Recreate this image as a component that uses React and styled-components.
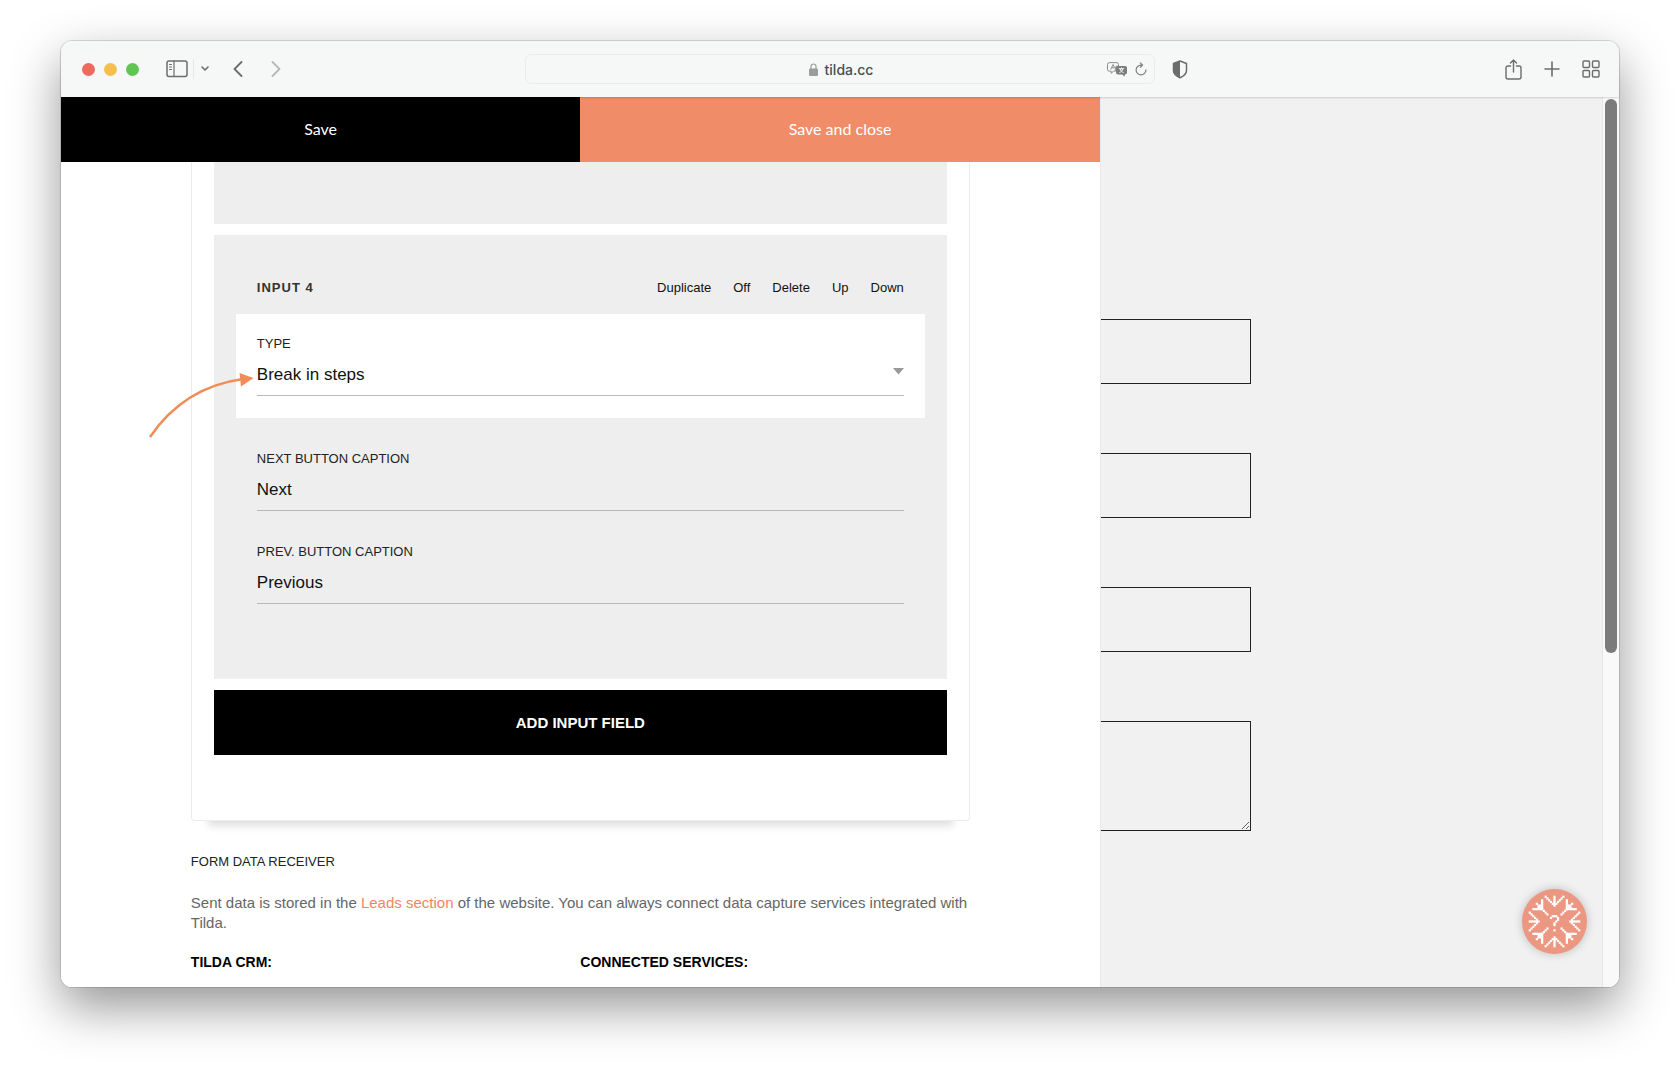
import React from "react";
import styled, { createGlobalStyle } from "styled-components";

const sans = '"Liberation Sans", Arial, sans-serif';

const GlobalStyle = createGlobalStyle`
  *, *::before, *::after { box-sizing: border-box; }
  body { margin: 0; background: #fff; font-family: ${sans}; color: #000; }
  button { border: 0; margin: 0; padding: 0; background: none; color: inherit; font: inherit; cursor: pointer; }
`;

const Desktop = styled.div`
  display: flex;
  height: 100vh;
  padding: 41px 61px 80px;
  overflow: hidden;
`;

const Browser = styled.div`
  position: relative;
  flex: 1;
  min-width: 0;
  display: flex;
  flex-direction: column;
  border-radius: 11px;
  box-shadow: 0 0 0 1px rgba(0, 0, 0, 0.12), 0 20px 50px rgba(0, 0, 0, 0.42);
`;

const Toolbar = styled.header`
  display: grid;
  grid-template-columns: 1fr 40.5% 1fr;
  align-items: center;
  height: 56px;
  flex: none;
  background: #f6f8f7;
  border-radius: 11px 11px 0 0;
  color: #6a6d6c;
  box-shadow: 0 1px 2px rgba(0, 0, 0, 0.15);
  z-index: 1;
`;

const ToolGroup = styled.div`
  display: flex;
  align-items: center;
  gap: ${(p) => p.$gap}px;
  padding: ${(p) => p.$pad || 0};
  justify-content: ${(p) => p.$justify || "flex-start"};
`;

const Light = styled.button`
  width: 13px;
  height: 13px;
  border-radius: 50%;
  background: ${(p) => p.$color};
`;

const ToolButton = styled.button`
  display: flex;
  align-items: center;
  justify-content: center;
  width: ${(p) => p.$w || 22}px;
  height: 24px;
  opacity: ${(p) => (p.disabled ? 0.45 : 1)};
`;

const Separator = styled.span`
  width: 1px;
  height: 20px;
  background: #e6e8e7;
`;

const AddressBar = styled.div`
  display: grid;
  grid-template-columns: 1fr auto 1fr;
  align-items: center;
  height: 30px;
  padding: 0 4px 0 6px;
  border: 1px solid #eaecec;
  border-radius: 6px;
`;

const Address = styled.div`
  grid-column: 2;
  display: flex;
  align-items: center;
  gap: 7px;
  padding-top: 1px;
  font: 500 14px/20px Inter, sans-serif;
  color: #4b4e4d;
`;

const Viewport = styled.main`
  flex: 1;
  min-height: 0;
  display: grid;
  grid-template-columns: 2fr 1fr;
  background: #f1f1f1;
  border-radius: 0 0 11px 11px;
  overflow: hidden;
`;

const Panel = styled.section`
  min-width: 0;
  display: flex;
  flex-direction: column;
  background: #fff;
  overflow: hidden;
`;

const SaveBar = styled.div`
  display: flex;
  flex: none;
`;

const SaveButton = styled.button`
  flex: 1;
  height: 65px;
  padding-bottom: 2px;
  background: ${(p) => (p.$accent ? "#f08c67" : "#000")};
  color: #fff;
  font: 400 16px/24px Lato, sans-serif;
`;

const Settings = styled.form`
  width: 75%;
  margin: 0 auto;
`;

const Card = styled.div`
  display: flex;
  flex-direction: column;
  gap: 11px;
  padding: 0 22px 65px;
  border: 1px solid #ececec;
  border-top: 0;
  border-radius: 0 0 4px 4px;
  box-shadow: 0 22px 8px -17px rgba(0, 0, 0, 0.13);
`;

const PreviousBlock = styled.div`
  height: 62px;
  background: #eee;
`;

const Block = styled.section`
  display: flex;
  flex-direction: column;
  padding: 43px 22px 75px;
  background: #eee;
`;

const BlockHead = styled.div`
  display: flex;
  align-items: center;
  justify-content: space-between;
  height: 20px;
  margin-bottom: 16px;
  padding: 0 21px;
`;

const BlockTitle = styled.h2`
  margin: 0;
  font-size: 13px;
  line-height: 20px;
  letter-spacing: 1px;
  color: #333;
`;

const Actions = styled.div`
  display: flex;
  gap: 22px;
`;

const Action = styled.button`
  font-size: 13px;
  line-height: 20px;
  color: #111;
`;

const Highlight = styled.div`
  position: relative;
  padding: 20px 0 22px;
  background: #fff;
`;

const Pointer = styled.svg`
  position: absolute;
  left: -88px;
  top: 58px;
  pointer-events: none;
`;

const FieldList = styled.div`
  display: flex;
  flex-direction: column;
  gap: 31px;
`;

const Field = styled.div`
  display: flex;
  flex-direction: column;
  padding: 0 21px;
`;

const Label = styled.label`
  font-size: 13px;
  line-height: 20px;
  color: #222;
  text-transform: uppercase;
`;

const Control = styled.input`
  grid-area: 1 / 1;
  width: 100%;
  height: 42px;
  margin: 0;
  padding: 0;
  appearance: none;
  background: transparent;
  border: 0;
  border-bottom: 1px solid #b8b8b8;
  border-radius: 0;
  outline: 0;
  color: #111;
  font: 400 17px/24px ${sans};
`;

const SelectWrap = styled.div`
  display: grid;
  align-items: center;
`;

const Caret = styled.svg`
  grid-area: 1 / 1;
  justify-self: end;
  margin-bottom: 8px;
  pointer-events: none;
`;

const AddButton = styled.button`
  height: 65px;
  background: #000;
  color: #fff;
  font-size: 15px;
  font-weight: 700;
  text-transform: uppercase;
`;

const Receiver = styled.section`
  padding-top: 31px;
`;

const ReceiverTitle = styled.h3`
  margin: 0 0 21px;
  font-size: 13px;
  font-weight: 400;
  line-height: 20px;
  color: #222;
  text-transform: uppercase;
`;

const Note = styled.p`
  margin: 0 0 19px;
  font-size: 15px;
  line-height: 20px;
  color: #666;
`;

const NoteLink = styled.a`
  color: #f4845f;
  text-decoration: none;
`;

const Services = styled.div`
  display: grid;
  grid-template-columns: 1fr 1fr;
`;

const ServiceTitle = styled.h4`
  margin: 0;
  font-size: 14px;
  line-height: 20px;
`;

const Preview = styled.aside`
  display: flex;
  justify-content: space-between;
  border-left: 1px solid #e9e9e9;
  min-width: 0;
`;

const PreviewForm = styled.form`
  display: flex;
  flex-direction: column;
  gap: 69px;
  width: 29%;
  padding-top: 222px;
`;

const previewBox = `
  display: block;
  width: 100%;
  margin: 0;
  padding: 0 20px;
  background: transparent;
  border: 1px solid #222;
  border-left: 0;
  border-radius: 0;
  outline: 0;
`;

const PreviewInput = styled.input`
  ${previewBox}
  height: 65px;
`;

const PreviewArea = styled.textarea`
  ${previewBox}
  height: 110px;
`;

const ScrollTrack = styled.div`
  width: 17px;
  padding: 2px;
  background: #f9f9f9;
  border-left: 1px solid #e6e6e6;
`;

const ScrollThumb = styled.div`
  width: 12px;
  height: 62.5%;
  border-radius: 6px;
  background: #7b7b7b;
`;

const HelpButton = styled.button`
  position: absolute;
  right: 32px;
  bottom: 33px;
  display: flex;
  width: 65px;
  height: 65px;
  border-radius: 50%;
  background: #eb9781;
  box-shadow: 0 0 10px rgba(0, 0, 0, 0.22);
`;

const range = (a, b) => Array.from({ length: b - a + 1 }, (_, i) => a + i);

const straight = [
  ...range(-14, -9).map((y) => [0, y]),
  ...range(1, 5).flatMap((d) => [[d, -9 - d], [-d, -9 - d]]),
];
const diagonal = [
  ...range(-12, -7).flatMap((n) => [[n, -7], [-7, n]]),
  ...range(-10, -8).map((n) => [n, n]),
  [-9, -8], [-8, -9], [-6, -6], [-5, -5], [-4, -4],
];
const question = [
  [-2, -2], [-1, -3], [0, -3], [1, -3], [2, -2], [2, -1], [1, 0], [0, 1], [0, 2], [0, 5],
];

function Snowflake() {
  const arm = [...straight, ...diagonal];
  const pixels = [
    ...arm,
    ...arm.map(([x, y]) => [-y, x]),
    ...arm.map(([x, y]) => [-x, -y]),
    ...arm.map(([x, y]) => [y, -x]),
    ...question,
  ];
  return (
    <svg width="65" height="65" viewBox="-18.4 -18.4 36.8 36.8" fill="#fff" aria-hidden="true">
      {pixels.map(([x, y], i) => (
        <rect key={i} x={x - 0.62} y={y - 0.62} width="1.24" height="1.24" />
      ))}
    </svg>
  );
}

const line = { fill: "none", stroke: "currentColor", strokeWidth: 1.6, strokeLinecap: "round", strokeLinejoin: "round" };

function BrowserToolbar() {
  return (
    <Toolbar>
      <ToolGroup $gap={16} $pad="0 0 0 21px">
        <ToolGroup $gap={9} $pad="0 11px 0 0">
          <Light $color="#ed6a5e" aria-label="Close window" />
          <Light $color="#f5bf4f" aria-label="Minimize window" />
          <Light $color="#61c554" aria-label="Zoom window" />
        </ToolGroup>
        <ToolGroup $gap={5}>
          <ToolButton aria-label="Show sidebar">
            <svg width="22" height="18" viewBox="0 0 22 18" {...line} strokeWidth="1.5">
              <rect x="1" y="1" width="20" height="15.5" rx="2" />
              <path d="M8 1v15.5M3.5 4.5h2M3.5 7h2M3.5 9.5h2" strokeWidth="1.2" />
            </svg>
          </ToolButton>
          <Separator />
          <ToolButton $w={12} aria-label="Sidebar options">
            <svg width="8" height="6" viewBox="0 0 8 6" {...line}><path d="M1 1l3 3 3-3" /></svg>
          </ToolButton>
        </ToolGroup>
        <ToolGroup $gap={16}>
          <ToolButton aria-label="Back">
            <svg width="10" height="16" viewBox="0 0 10 16" {...line} strokeWidth="1.8"><path d="M8.5 1L1.5 8l7 7" /></svg>
          </ToolButton>
          <ToolButton disabled aria-label="Forward">
            <svg width="10" height="16" viewBox="0 0 10 16" {...line} strokeWidth="1.8"><path d="M1.5 1l7 7-7 7" /></svg>
          </ToolButton>
        </ToolGroup>
      </ToolGroup>
      <AddressBar>
        <Address>
          <svg width="9" height="13" viewBox="0 0 9 13" aria-hidden="true">
            <path d="M2 6V3.5a2.5 2.5 0 015 0V6" fill="none" stroke="#999c9b" strokeWidth="1.2" />
            <rect y="5.5" width="9" height="7.5" rx="1.2" fill="#999c9b" />
          </svg>
          tilda.cc
        </Address>
        <ToolGroup $gap={5} $justify="flex-end">
          <ToolButton $w={20} aria-label="Translate">
            <svg width="20" height="15" viewBox="0 0 20 15">
              <path d="M2.5.6h7a2 2 0 012 2v1.6H10a1.6 1.6 0 00-1.6 1.6v3.4H6.5L4.2 11.3V9.2H2.5a2 2 0 01-2-2V2.6a2 2 0 012-2z" fill="none" stroke="#8a8d8c" />
              <path d="M3.8 7.5l2.3-5 1.6 3.3M4.7 5.8h2.5" fill="none" stroke="#8a8d8c" />
              <path d="M11 4h7a2 2 0 012 2v4.4a2 2 0 01-2 2h-.3v2.4l-2.500-2.4H11a2 2 0 01-2-2V6a2 2 0 012-2z" fill="#7a7d7c" />
              <path d="M11.8 6.7h5.4M14.5 5.500v1.200M12.4 10.6c2-.8 3-2 3.4-3.8M13.2 7c.4 1.7 1.6 3 3.4 3.6" fill="none" stroke="#f6f8f7" />
            </svg>
          </ToolButton>
          <ToolButton $w={18} aria-label="Reload">
            <svg width="12" height="14" viewBox="0 0 13 15" {...line} stroke="#7f8281" strokeWidth="1.3">
              <path d="M11.8 8.5A5.3 5.3 0 116.5 3.2h1.3M5.7.8l2.500 2.4-2.500 2.5" />
            </svg>
          </ToolButton>
        </ToolGroup>
      </AddressBar>
      <ToolGroup $gap={17} $pad="0 17px 0 14px" $justify="space-between">
        <ToolButton aria-label="Privacy report">
          <svg width="16" height="19" viewBox="0 0 16 19">
            <path d="M8 1l6.5 2.5v7c0 3.5-3 5.7-6.5 7.3-3.500-1.600-6.500-3.800-6.500-7.300v-7z" fill="none" stroke="currentColor" strokeWidth="1.5" strokeLinejoin="round" />
            <path d="M8 1v16.8c-3.500-1.600-6.500-3.800-6.500-7.300v-7z" fill="currentColor" />
          </svg>
        </ToolButton>
        <ToolGroup $gap={17}>
          <ToolButton aria-label="Share">
            <svg width="17" height="21" viewBox="0 0 17 21" {...line} strokeWidth="1.4">
              <path d="M5.5 7H3a2 2 0 00-2 2v9a2 2 0 002 2h11a2 2 0 002-2V9a2 2 0 00-2-2h-2.500M8.5 13V1.2M5.5 4l3-3 3 3" />
            </svg>
          </ToolButton>
          <ToolButton aria-label="New tab">
            <svg width="16" height="16" viewBox="0 0 16 16" {...line}><path d="M8 1v14M1 8h14" /></svg>
          </ToolButton>
          <ToolButton aria-label="Tab overview">
            <svg width="18" height="18" viewBox="0 0 18 18" {...line} strokeWidth="1.4">
              <rect x="1" y="1" width="6.5" height="6.5" rx="1" />
              <rect x="10.5" y="1" width="6.5" height="6.5" rx="1" />
              <rect x="1" y="10.5" width="6.5" height="6.5" rx="1" />
              <rect x="10.5" y="10.5" width="6.5" height="6.5" rx="1" />
            </svg>
          </ToolButton>
        </ToolGroup>
      </ToolGroup>
    </Toolbar>
  );
}

export default function App() {
  return (
    <Desktop>
      <GlobalStyle />
      <Browser>
        <BrowserToolbar />
        <Viewport>
          <Panel>
            <SaveBar>
              <SaveButton type="submit" form="settings">Save</SaveButton>
              <SaveButton type="button" $accent>Save and close</SaveButton>
            </SaveBar>
            <Settings id="settings" onSubmit={(e) => e.preventDefault()}>
              <Card>
                <PreviousBlock />
                <Block>
                  <BlockHead>
                    <BlockTitle>INPUT 4</BlockTitle>
                    <Actions>
                      {["Duplicate", "Off", "Delete", "Up", "Down"].map((name) => (
                        <Action key={name} type="button">{name}</Action>
                      ))}
                    </Actions>
                  </BlockHead>
                  <FieldList>
                    <Highlight>
                      <Field>
                        <Label htmlFor="type">Type</Label>
                        <SelectWrap>
                          <Control as="select" id="type" defaultValue="Break in steps">
                            <option>Break in steps</option>
                          </Control>
                          <Caret width="11" height="7" viewBox="0 0 11 7"><path d="M0 0h11L5.5 6.5z" fill="#999" /></Caret>
                        </SelectWrap>
                      </Field>
                      <Pointer width="107" height="67" viewBox="0 0 107 67" aria-hidden="true">
                        <path d="M2 65Q36 15 95 7" fill="none" stroke="#f28c56" strokeWidth="2.5" />
                        <path d="M91.500 1l14 5-12.500 8.500z" fill="#f28c56" />
                      </Pointer>
                    </Highlight>
                    <Field>
                      <Label htmlFor="next">Next button caption</Label>
                      <Control id="next" defaultValue="Next" />
                    </Field>
                    <Field>
                      <Label htmlFor="prev">Prev. button caption</Label>
                      <Control id="prev" defaultValue="Previous" />
                    </Field>
                  </FieldList>
                </Block>
                <AddButton type="button">Add input field</AddButton>
              </Card>
              <Receiver>
                <ReceiverTitle>Form data receiver</ReceiverTitle>
                <Note>
                  Sent data is stored in the <NoteLink href="#leads">Leads section</NoteLink> of the website. You can
                  always connect data capture services integrated with Tilda.
                </Note>
                <Services>
                  <ServiceTitle>TILDA CRM:</ServiceTitle>
                  <ServiceTitle>CONNECTED SERVICES:</ServiceTitle>
                </Services>
              </Receiver>
            </Settings>
          </Panel>
          <Preview>
            <PreviewForm>
              <PreviewInput aria-label="Name" />
              <PreviewInput aria-label="Email" />
              <PreviewInput aria-label="Phone" />
              <PreviewArea aria-label="Message" />
            </PreviewForm>
            <ScrollTrack>
              <ScrollThumb />
            </ScrollTrack>
          </Preview>
        </Viewport>
        <HelpButton type="button" aria-label="Help">
          <Snowflake />
        </HelpButton>
      </Browser>
    </Desktop>
  );
}
